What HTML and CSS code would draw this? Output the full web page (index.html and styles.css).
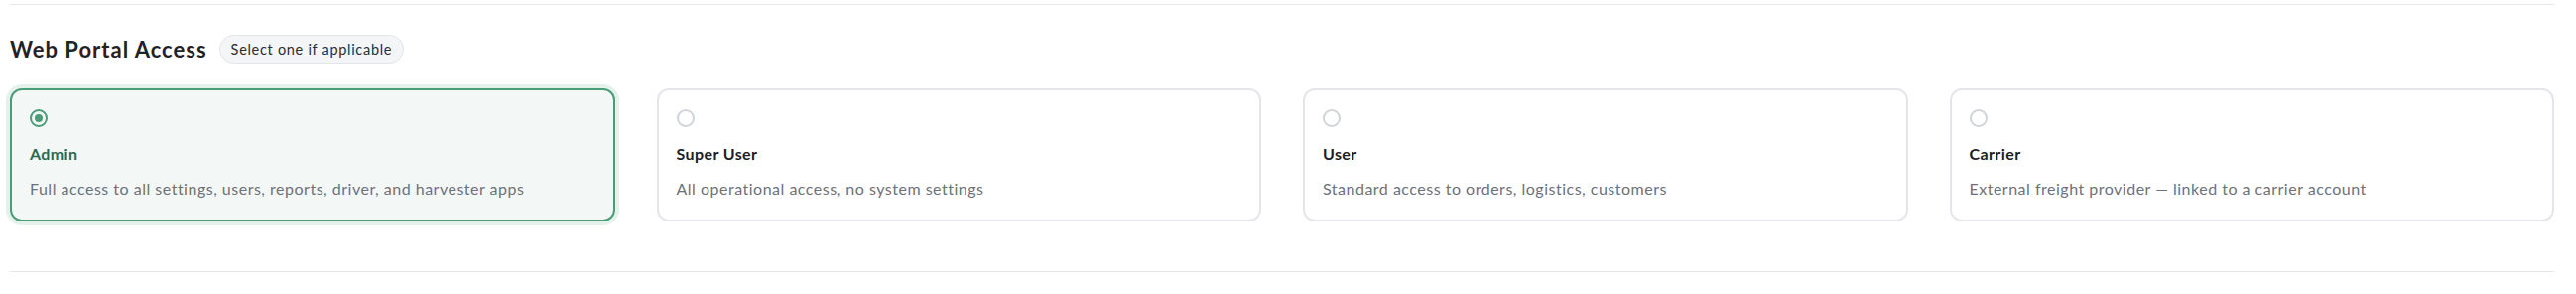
FILE: index.html
```html
<!DOCTYPE html>
<html lang="en">
<head>
<meta charset="utf-8">
<title>Web Portal Access</title>
<link rel="stylesheet" href="styles.css">
</head>
<body>
<div class="page">
  <hr class="rule">
  <section class="section">
    <div class="section-head">
      <h2 class="section-title">Web Portal Access</h2>
      <span class="pill">Select one if applicable</span>
    </div>
    <div class="options">
      <label class="option is-selected">
        <span class="radio"><span class="radio-dot"></span></span>
        <span class="option-title">Admin</span>
        <span class="option-desc">Full access to all settings, users, reports, driver, and harvester apps</span>
      </label>
      <label class="option">
        <span class="radio"></span>
        <span class="option-title">Super User</span>
        <span class="option-desc">All operational access, no system settings</span>
      </label>
      <label class="option">
        <span class="radio"></span>
        <span class="option-title">User</span>
        <span class="option-desc">Standard access to orders, logistics, customers</span>
      </label>
      <label class="option">
        <span class="radio"></span>
        <span class="option-title">Carrier</span>
        <span class="option-desc">External freight provider — linked to a carrier account</span>
      </label>
    </div>
  </section>
  <hr class="rule rule-bottom">
</div>
</body>
</html>
```

FILE: styles.css
```css
* { box-sizing: border-box; }
html, body { margin: 0; padding: 0; background: #ffffff; }
body {
  font-family: "Lato", "Noto Sans", "Liberation Sans", sans-serif;
  color: #1f2328;
}
.page {
  padding: 4px 22px 0 10px;
}
.rule {
  border: 0;
  border-top: 1px solid #e6e7eb;
  margin: 0;
  height: 0;
}
.section {
  padding-top: 30px;
}
.section-head {
  display: flex;
  align-items: center;
  gap: 12px;
  height: 29px;
}
.section-title {
  margin: 0;
  font-size: 22px;
  font-weight: 700;
  letter-spacing: 1px;
  color: #1f2328;
  line-height: 29px;
}
.pill {
  display: inline-flex;
  align-items: center;
  height: 29px;
  padding: 0 11px;
  border: 1px solid #e3e5e9;
  border-radius: 999px;
  background: #f4f5f7;
  font-size: 14.5px;
  letter-spacing: 0.7px;
  color: #2a2d33;
}
.options {
  display: grid;
  grid-template-columns: repeat(4, 1fr);
  gap: 42px;
  margin-top: 25px;
}
.option {
  display: flex;
  flex-direction: column;
  align-items: flex-start;
  height: 134px;
  padding: 19px 18px 0;
  border: 2px solid #e5e6eb;
  border-radius: 12px;
  background: #ffffff;
  cursor: pointer;
}
.option.is-selected {
  border-color: #4c9c77;
  background: #f3f8f6;
  box-shadow: 0 0 0 4px #e5f1eb;
}
.radio {
  display: flex;
  align-items: center;
  justify-content: center;
  width: 18px;
  height: 18px;
  border: 2px solid #d0d4d9;
  border-radius: 50%;
  flex: none;
}
.is-selected .radio {
  border-color: #4c9c77;
}
.radio-dot {
  width: 8px;
  height: 8px;
  border-radius: 50%;
  background: #4c9c77;
}
.option-title {
  margin-top: 17px;
  font-size: 16px;
  line-height: 20px;
  font-weight: 700;
  letter-spacing: 0.4px;
  color: #1d2024;
}
.is-selected .option-title {
  color: #2b6a4e;
}
.option-desc {
  margin-top: 15px;
  font-size: 16px;
  line-height: 20px;
  letter-spacing: 0.5px;
  color: #6d717a;
}
.rule-bottom {
  margin-top: 50px;
}
```
